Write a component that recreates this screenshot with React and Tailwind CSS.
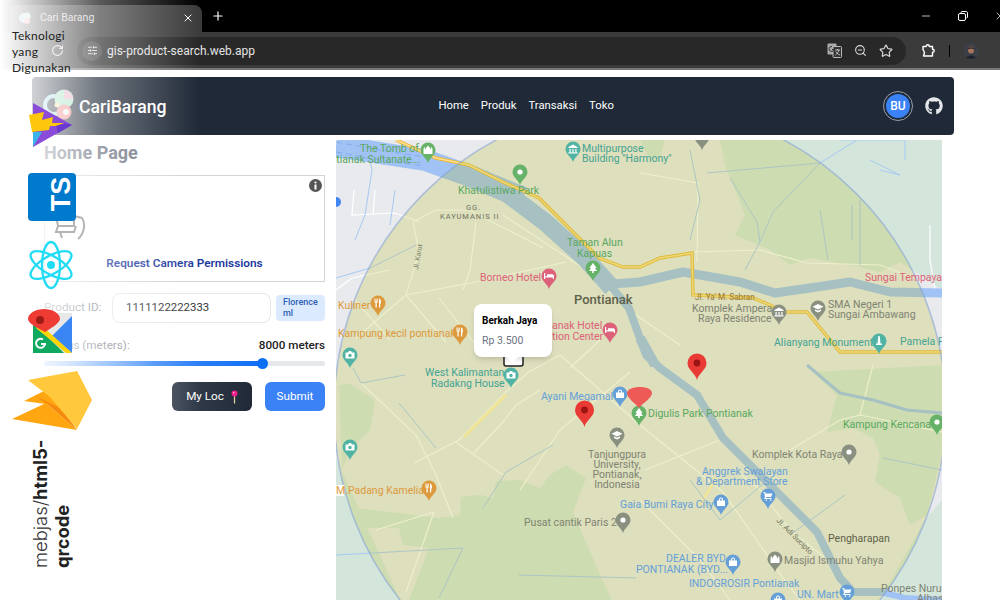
import { FaGithub } from "react-icons/fa";
import { RotateCw, X, Plus, Minus, ZoomOut, Star, SlidersHorizontal } from "lucide-react";

const GREEN = "#5aa85f";
const TEAL = "#45a392";
const ORANGE = "#dd9a3c";
const PINK = "#dd6178";
const BLUE = "#659fd8";
const GREY = "#7f8372";
const GREY_PIN = "#8a9080";
const GREEN_PIN = "#66b268";
const TEAL_PIN = "#50b3a3";

const greens = [
  "M720 140L942 140L942 290L900 262L880 272L850 265L810 258L790 265L770 250L735 235L745 215L735 190L725 165Z",
  "M336 458L336 600L400 600Z",
  "M339 385L350 384L375 400L370 430L350 450L342 470Z",
  "M439 518L460 515L461 497L480 495L494 498L496 481L519 480L540 488L550 475L566 465L586 478L573 512L600 575L612 600L409 600L429 548L403 545L399 528L356 528L356 508L439 518Z",
  "M813 372L837 395L827 432L853 428L873 438L880 455L875 482L900 498L910 525L927 515L942 452L942 365Z",
  "M830 600L880 600L925 520L942 500L942 600Z",
  "M640 140L665 140L660 158L650 160Z",
];

const water = [
  { d: "M336 150L380 160L425 166L470 181L523 204L570 244L603 277L629 308L646 355L660 368L697 395L723 438L780 495L817 532L840 578L853 592L890 592", w: 8 },
  { d: "M336 146L380 153L425 160L470 176L523 198", w: 22 },
  { d: "M505 192L545 222L585 258L612 288", w: 18 },
  { d: "M612 284L640 282L683 272L740 282L775 293L810 288L850 282L890 292L942 293", w: 9 },
  { d: "M640 338L655 365", w: 10 },
  { d: "M807 365L840 393L873 400L907 410L942 413", w: 3 },
  { d: "M880 592L905 598L942 600", w: 6 },
];

const yellowRoad = "M396 140L436 158L469 165L503 182L539 198L569 228L599 258L623 267L640 267L660 258L692 253L693 295L753 298L770 305L783 312L807 312L840 352L943 352";

const roads = [
  "M413 222L436 210L469 210L543 248",
  "M503 215L583 268L636 315L680 345",
  "M406 295L476 282L566 262",
  "M413 222L419 252L406 295L446 342",
  "M356 338L406 295",
  "M439 298L486 358",
  "M476 222L470 270L463 290",
  "M414 463L459 440L506 392L529 372L560 355",
  "M361 383L416 435L436 475L453 518",
  "M456 442L503 475",
  "M474 453L503 422L516 405L540 390",
  "M434 512L406 592",
  "M376 530L434 512",
  "M640 425L723 492L783 578L800 600",
  "M777 458L840 420L860 415L873 365",
  "M860 415L942 432",
  "M640 173L698 183L697 262",
  "M692 252L760 250L807 263L880 265L923 282",
  "M735 470L760 490L790 530L840 570",
  "M560 355L640 425",
  "M600 340L570 368",
  "M630 372L560 430L520 490",
  "M336 290L352 278L390 270",
  "M354 190L352 215L395 213L420 222",
  "M375 190L373 215",
  "M640 500L700 560L730 600",
  "M645 470L720 440",
  "M355 300L390 340",
  "M930 225L930 260L935 290",
];

const streams = [
  "M336 278L370 268L416 245",
  "M730 178L757 222L760 242L745 270",
  "M707 173L820 163L857 140",
  "M820 163L773 212L760 242",
  "M399 403L436 448",
  "M353 368L361 383L405 375",
  "M483 508L506 472L553 445",
  "M336 555L463 548L439 598",
  "M519 575L636 578",
  "M780 470L720 520L690 480",
  "M883 458L942 470",
  "M845 495L790 535",
  "M840 140L905 140L905 160",
  "M870 160L900 175L880 170",
  "M852 205L852 240",
  "M365 140L372 170L365 215L355 240",
  "M395 190L390 225",
  "M690 150L700 200L690 240",
  "M820 210L828 260",
  "M860 200L860 265",
];

// x, y are the head centre of the place pin; the tip is 13px below
function Pin({ x, y, color, glyph = "dot" }) {
  return (
    <g transform={`translate(${x} ${y})`}>
      <path d="M0 13C-1.5 8 -7.5 5 -7.5 0A7.5 7.5 0 1 1 7.5 0C7.5 5 1.5 8 0 13Z" fill={color} />
      {glyph === "dot" && <circle r="2.6" fill="#fff" />}
      {glyph === "tree" && <path d="M0 -5L3.6 0H2L4 3H-4L-2 0H-3.6ZM-.8 3H.8V5H-.8Z" fill="#fff" />}
      {glyph === "camera" && <path d="M-4.5 -2.5H-2L-1 -4H1L2 -2.5H4.5V3.5H-4.5ZM0 -1.2A1.7 1.7 0 1 0 0 2.2A1.7 1.7 0 1 0 0 -1.2Z" fill="#fff" fillRule="evenodd" />}
      {glyph === "fork" && <path d="M-3.5 -4.5V-.5H-2.5V4.5H-1.3V-.5H-.3V-4.5H-1V-1.5H-1.5V-4.5H-2.3V-1.5H-2.8V-4.5ZM1 -4.5C3 -4.5 3 -1 3 .5H2.2V4.5H1Z" fill="#fff" />}
      {glyph === "bed" && <path d="M-5 -3H-3.8V.2H-2V-1.8H3C4.2 -1.8 5 -1 5 0V3H3.8V1.5H-3.8V3H-5Z" fill="#fff" />}
      {glyph === "bag" && <path d="M-4 -1.5H4V4H-4ZM-2 -1.5V-2.5A2 2 0 0 1 2 -2.5V-1.5H1V-2.5A1 1 0 0 0 -1 -2.5V-1.5Z" fill="#fff" />}
      {glyph === "cart" && <path d="M-4.5 -4H-3L-2.3 -2.6H4.5L3 1H-1.7L-2.3 2H3.5V3H-4L-3 1L-3.8 -3H-4.5ZM-2.3 3.4H-1V4.7H-2.3ZM2 3.4H3.3V4.7H2Z" fill="#fff" />}
      {glyph === "cap" && <path d="M0 -4L5.5 -1.2L0 1.6L-5.5 -1.2ZM-3 1.2L0 2.8L3 1.2V3L0 4.6L-3 3Z" fill="#fff" />}
      {glyph === "monument" && <path d="M-.7 -5H.7L1.5 2.5H3V4H-3V2.5H-1.5Z" fill="#fff" />}
      {glyph === "school" && <path d="M0 -4.5L4.5 -2V-1H-4.5V-2ZM-3.5 0H-2.3V3H-3.5ZM-.6 0H.6V3H-.6ZM2.3 0H3.5V3H2.3ZM-4.5 3.2H4.5V4.4H-4.5Z" fill="#fff" />}
      {glyph === "mosque" && <path d="M-4.5 4V-1L-3.7 -3.5L-3 -1V0C-2.5 -2 -1 -3 0 -4.5C1 -3 2.5 -2 3 0V-1L3.7 -3.5L4.5 -1V4Z" fill="#fff" />}
    </g>
  );
}

function RedMarker({ x, y }) {
  return (
    <g transform={`translate(${x} ${y})`}>
      <path d="M0 17C-1.5 10 -9.5 7 -9.5 0A9.5 9.5 0 1 1 9.5 0C9.5 7 1.5 10 0 17Z" fill="#ea3a35" />
      <circle r="3.4" fill="#9c1414" />
    </g>
  );
}

function Label({ x, y, color, size = 10.5, anchor = "start", weight = 400, children }) {
  return (
    <text x={x} y={y} fill={color} fontSize={size} fontWeight={weight} textAnchor={anchor}>
      {children}
    </text>
  );
}

function MapView() {
  return (
    <svg viewBox="336 140 606 460" className="block w-full h-full" style={{ fontFamily: "Roboto, sans-serif" }}>
      <rect x="336" y="140" width="606" height="460" fill="#e8eaed" />
      {greens.map((d) => <path key={d} d={d} fill="#d4e6dc" />)}
      {roads.map((d) => <path key={d} d={d} fill="none" stroke="#fff" strokeWidth="1.2" />)}
      <path d="M464 437L506 395" stroke="#fff0c0" strokeWidth="3.5" />
      <path d="M700 505L716 478" stroke="#fff0c0" strokeWidth="3" />
      {streams.map((d) => <path key={d} d={d} fill="none" stroke="#a8c8f5" strokeWidth="1" />)}
      {water.map((p) => <path key={p.d} d={p.d} fill="none" stroke="#a0c2f4" strokeWidth={p.w} strokeLinejoin="round" />)}
      <path d="M336 142L380 150L425 157M336 152L380 160L425 166" fill="none" stroke="#7da6e8" strokeWidth="0.8" strokeDasharray="6 4" />
      <path d={yellowRoad} fill="none" stroke="#eeb73c" strokeWidth="3.4" />
      <path d={yellowRoad} fill="none" stroke="#fde293" strokeWidth="1.4" />
      <circle cx="336" cy="202" r="5" fill="#4285f4" />
      <circle cx="640" cy="410" r="306" fill="#bcbe30" fillOpacity="0.25" stroke="#7f9fd8" strokeOpacity="0.55" strokeWidth="1.5" />

      <Label x={419} y={152} color={GREEN} anchor="end">The Tomb of</Label>
      <Label x={420} y={163} color={GREEN} anchor="end">ontianak Sultanate...</Label>
      <Pin x={428} y={150} color={GREEN_PIN} glyph="mosque" />
      <Label x={582} y={152} color={TEAL}>Multipurpose</Label>
      <Label x={582} y={162} color={TEAL}>Building "Harmony"</Label>
      <Pin x={573} y={149} color={TEAL_PIN} glyph="school" />
      <Pin x={702} y={137} color={GREY_PIN} />
      <Pin x={520} y={172} color={GREEN_PIN} />
      <Label x={458} y={194} color={GREEN}>Khatulistiwa Park</Label>
      <text x={466} y={210} fill="#6f7260" fontSize="7.5" letterSpacing="1">GG.</text>
      <text x={440} y={219} fill="#6f7260" fontSize="7.5" letterSpacing="1">KAYUMANIS II</text>
      <text x={0} y={0} fill="#7b7d66" fontSize="7" transform="translate(418 270) rotate(-80)">Jl. Karot</text>
      <Label x={567} y={246} color={GREEN}>Taman Alun</Label>
      <Label x={577} y={257} color={GREEN}>Kapuas</Label>
      <Pin x={593} y={268} color={GREEN_PIN} glyph="tree" />
      <Label x={480} y={281} color={PINK}>Borneo Hotel</Label>
      <Pin x={549} y={276} color={PINK} glyph="bed" />
      <Label x={574} y={304} color="#5f6148" size={13} weight={500}>Pontianak</Label>
      <Label x={338} y={309} color={ORANGE}>Kuliner</Label>
      <Pin x={378} y={303} color={ORANGE} glyph="fork" />
      <Label x={338} y={337} color={ORANGE}>Kampung kecil pontianak</Label>
      <Pin x={460} y={332} color={ORANGE} glyph="fork" />
      <Label x={552} y={329} color={PINK}>anak Hotel</Label>
      <Label x={552} y={340} color={PINK}>tion Center</Label>
      <Pin x={610} y={330} color={PINK} glyph="bed" />
      <Pin x={350} y={355} color={TEAL_PIN} glyph="camera" />
      <Label x={425} y={376} color={TEAL}>West Kalimantan</Label>
      <Label x={431} y={387} color={TEAL}>Radakng House</Label>
      <Pin x={511} y={375} color={TEAL_PIN} glyph="camera" />
      <Label x={541} y={400} color={BLUE}>Ayani Megamal</Label>
      <Pin x={620} y={394} color={BLUE} glyph="bag" />
      <Pin x={639} y={413} color={GREEN_PIN} glyph="tree" />
      <Label x={648} y={417} color={GREEN}>Digulis Park Pontianak</Label>
      <Pin x={617} y={435} color={GREY_PIN} glyph="cap" />
      <Label x={617} y={458} color={GREY} anchor="middle">Tanjungpura</Label>
      <Label x={617} y={468} color={GREY} anchor="middle">University,</Label>
      <Label x={617} y={478} color={GREY} anchor="middle">Pontianak,</Label>
      <Label x={617} y={488} color={GREY} anchor="middle">Indonesia</Label>
      <Label x={620} y={508} color={BLUE}>Gaia Bumi Raya City</Label>
      <Pin x={721} y={502} color={BLUE} glyph="bag" />
      <Label x={524} y={526} color={GREY}>Pusat cantik Paris 2</Label>
      <Pin x={623} y={520} color={GREY_PIN} />
      <rect x="336" y="485" width="8" height="11" fill="#fff" />
      <Label x={336} y={494} color={ORANGE}>M.Padang Kamelia</Label>
      <Pin x={429} y={488} color={ORANGE} glyph="fork" />
      <Pin x={350} y={447} color={TEAL_PIN} glyph="camera" />
      <Label x={843} y={428} color={GREEN}>Kampung Kencana</Label>
      <Pin x={937} y={422} color={GREEN_PIN} />
      <Label x={752} y={458} color={GREY}>Komplek Kota Raya</Label>
      <Pin x={849} y={452} color={GREY_PIN} />
      <Label x={702} y={475} color={BLUE}>Anggrek Swalayan</Label>
      <Label x={696} y={485} color={BLUE}>& Department Store</Label>
      <Pin x={768} y={496} color={BLUE} glyph="cart" />
      <text x={0} y={0} fill="#70725c" fontSize="7.5" transform="translate(776 521) rotate(45)">Jl. Adi Sucipto</text>
      <Label x={828} y={542} color="#5f6148">Pengharapan</Label>
      <Label x={666} y={562} color={BLUE}>DEALER BYD</Label>
      <Label x={636} y={573} color={BLUE}>PONTIANAK (BYD...</Label>
      <Pin x={733} y={562} color={BLUE} glyph="bag" />
      <Label x={784} y={564} color={GREY}>Masjid Ismuhu Yahya</Label>
      <Pin x={775} y={559} color={GREY_PIN} glyph="mosque" />
      <Label x={689} y={587} color={BLUE}>INDOGROSIR Pontianak</Label>
      <Pin x={778} y={600} color={BLUE} glyph="bag" />
      <Label x={797} y={598} color={BLUE}>UN. Mart</Label>
      <Pin x={847} y={592} color={BLUE} glyph="cart" />
      <Label x={881} y={592} color={GREY}>Ponpes Nurus</Label>
      <Label x={917} y={602} color={GREY}>Alhas</Label>
      <Label x={692} y={312} color={GREY}>Komplek Ampera</Label>
      <Label x={698} y={322} color={GREY}>Raya Residence</Label>
      <Pin x={779} y={312} color={GREY_PIN} glyph="school" />
      <text x={695} y={300} fill="#9a7a3a" fontSize="8.2">Jl. Ya' M. Sabran</text>
      <Label x={828} y={308} color={GREY}>SMA Negeri 1</Label>
      <Label x={828} y={318} color={GREY}>Sungai Ambawang</Label>
      <Pin x={818} y={308} color={GREY_PIN} glyph="cap" />
      <Label x={865} y={281} color={PINK}>Sungai Tempayan</Label>
      <Label x={774} y={346} color={TEAL}>Alianyang Monument</Label>
      <Pin x={879} y={341} color={TEAL_PIN} glyph="monument" />
      <Label x={900} y={345} color={TEAL}>Pamela F</Label>

      <RedMarker x={584.5} y={410} />
      <RedMarker x={697} y={363} />
      <path d="M639 408C634 402 627 398 627 393C627 389 634 387 640 387C646 387 652 389 652 393C652 398 644 402 639 408Z" fill="#ee5a55" />

      <rect x="504" y="352" width="19" height="14" rx="2" fill="#fff" stroke="#222" strokeWidth="1.5" />
    </svg>
  );
}

function Popup() {
  return (
    <div className="absolute left-[138px] top-[164px] w-[78px] h-[53px] bg-white rounded-lg shadow-md px-2 pt-[10px] font-['Roboto',sans-serif]">
      <p className="text-[10px] leading-[14px] font-bold text-black">Berkah Jaya</p>
      <p className="text-[10.5px] leading-[14px] mt-[6px] text-gray-500">Rp 3.500</p>
      <div className="absolute left-[34px] bottom-[-4px] w-[9px] h-[9px] bg-white rotate-45" />
    </div>
  );
}

function BrowserChrome() {
  return (
    <div className="h-[70px] bg-black font-['Roboto',sans-serif]">
      <div className="h-[32px] flex items-end relative">
        <div className="ml-[10px] w-[192px] h-[27px] pb-[2px] bg-[#3b3b3b] rounded-t-lg flex items-center px-[8px] text-[#d8d8d8]">
          <svg width="14" height="14" viewBox="0 0 14 14">
            <circle cx="6" cy="7" r="5" fill="#a8d8e8" />
            <circle cx="9" cy="5" r="3.5" fill="#bde0c0" />
            <circle cx="9" cy="10" r="3" fill="#e8a0a0" />
          </svg>
          <span className="ml-[8px] text-[10.5px]">Cari Barang</span>
          <X size={12} className="ml-auto text-white" />
        </div>
        <Plus size={14} className="ml-[9px] mb-[9px] text-white" />
        <div className="ml-auto flex items-center gap-[25px] pb-[10px] text-white translate-x-[6px]">
          <Minus size={12} strokeWidth={1.5} />
          <svg width="12" height="12" viewBox="0 0 12 12" fill="none" stroke="#fff" strokeWidth="1">
            <rect x="1.5" y="3.5" width="7" height="7" rx="1.5" />
            <path d="M4 3V2.5C4 1.9 4.5 1.5 5 1.5H9C10 1.5 10.5 2 10.5 3V7C10.5 7.6 10 8 9.5 8" />
          </svg>
          <X size={12} strokeWidth={1.5} />
        </div>
      </div>
      <div className="h-[38px] pt-[1px] bg-[#3b3b3b] flex items-center border-b-2 border-[#777]">
        <RotateCw size={13} className="ml-[51px] text-[#e0e0e0]" />
        <div className="ml-[13px] w-[829px] h-[28px] rounded-full bg-[#282828] flex items-center pl-[5px] pr-[13px]">
          <span className="w-[20px] h-[20px] rounded-full bg-[#3f3f3f] flex items-center justify-center">
            <SlidersHorizontal size={11} className="text-[#e0e0e0]" />
          </span>
          <span className="ml-[5px] text-[12px] text-[#e3e3e3]">gis-product-search.web.app</span>
          <div className="ml-auto flex items-center gap-[12px] text-[#dcdcdc]">
            <svg width="15" height="15" viewBox="0 0 15 15">
              <rect x="0.5" y="0.5" width="9" height="11" rx="1" fill="#aaa" />
              <rect x="6" y="3.5" width="8.5" height="11" rx="1" fill="#333" stroke="#bbb" />
              <path d="M8 7H13M10.5 6V7M12 7C11.5 9 10 11 8.5 12M9 8.5C10 10 11 11.5 13 12" stroke="#ddd" strokeWidth="0.8" fill="none" />
              <path d="M5 3.5A2.5 2.5 0 1 0 7 6.5H5" stroke="#333" strokeWidth="1" fill="none" />
            </svg>
            <ZoomOut size={13} />
            <Star size={14} />
          </div>
        </div>
        <svg width="15" height="15" viewBox="0 0 15 15" fill="none" stroke="#fff" strokeWidth="1.4" strokeLinejoin="round" className="ml-[15px]">
          <path d="M2 3.5H5.2C5.2 1.2 8.3 1.2 8.3 3.5H11.5V6.2C13.8 6.2 13.8 9.3 11.5 9.3V13H2.5L3.5 9.5L2 6.5Z" />
        </svg>
        <div className="ml-[13px] w-[1px] h-[12px] bg-black" />
        <svg width="16" height="16" viewBox="0 0 16 16" className="ml-[13px]">
          <circle cx="8" cy="8" r="8" fill="#3c3f48" />
          <ellipse cx="8" cy="7" rx="3" ry="3.6" fill="#a5765e" />
          <path d="M4.7 6.5C4.5 3.5 11.5 3.5 11.3 6.5C9.5 5 6.5 5 4.7 6.5Z" fill="#1b1b1f" />
          <path d="M3 15C4 11.5 12 11.5 13 15L8 16Z" fill="#20242e" />
        </svg>
      </div>
    </div>
  );
}

function Navbar() {
  return (
    <nav className="ml-[32px] mt-[7px] w-[922px] h-[58px] bg-[#1f2937] rounded flex items-center pl-[11px] pr-[10px] text-white font-['Roboto',sans-serif]">
      <svg width="33" height="33" viewBox="0 0 33 33" className="mt-[-4px]">
        <circle cx="11" cy="17" r="9" fill="none" stroke="#a5dbe8" strokeWidth="4" />
        <circle cx="21" cy="11" r="9.5" fill="#a9e4c6" />
        <path d="M21 2A9.5 9.5 0 0 1 30 11H21Z" fill="#e9b1c3" />
        <circle cx="21" cy="24" r="7.5" fill="#ee8a8a" />
        <circle cx="23" cy="24" r="3" fill="#f5f5f5" />
        <circle cx="14" cy="17" r="2.5" fill="#f8e2a0" />
      </svg>
      <span className="ml-[3px] mt-[3px] text-[17.6px] font-medium">CariBarang</span>
      <div className="ml-[272px] mt-[1px] flex items-center gap-[12px] text-[11.3px]">
        <span>Home</span>
        <span>Produk</span>
        <span>Transaksi</span>
        <span>Toko</span>
      </div>
      <div className="ml-auto w-[30px] h-[30px] rounded-full border border-gray-400 flex items-center justify-center">
        <span className="w-[24px] h-[24px] rounded-full bg-[#3b82f6] flex items-center justify-center text-[12px] font-medium">BU</span>
      </div>
      <FaGithub size={18} className="ml-[12px] mr-[1px] text-[#e5e7eb]" />
    </nav>
  );
}

function ScanCard() {
  return (
    <div className="relative mt-[9px] h-[107px] border border-[#d4d4d8] flex flex-col items-center justify-end pb-[8px]">
      <svg width="13" height="13" viewBox="0 0 13 13" className="absolute top-[3px] right-[2px]">
        <circle cx="6.5" cy="6.5" r="6.5" fill="#555" />
        <circle cx="6.5" cy="3.5" r="1.1" fill="#fff" />
        <rect x="5.5" y="5.5" width="2" height="5" fill="#fff" />
      </svg>
      <span className="text-[11.8px] font-semibold text-[#1e3a9e]">Request Camera Permissions</span>
    </div>
  );
}

function SearchForm() {
  return (
    <aside className="w-[281px] font-['Roboto',sans-serif]">
      <h1 className="text-[18px] leading-[26px] font-bold text-[#6b7280]">Home Page</h1>
      <ScanCard />
      <div className="mt-[11px] flex items-center">
        <label className="w-[68px] text-[11.7px] text-[#8b8f96]">Product ID:</label>
        <div className="w-[159px] h-[30px] rounded-lg border border-[#e5e7eb] flex items-center pl-[13px] text-[11.4px] text-[#333]">1111122222333</div>
        <div className="ml-[5px] w-[49px] h-[26px] rounded bg-[#dbeafe] px-[7px] py-[2px] text-[9px] leading-[11px] font-medium text-[#2f5fb8]">Florence ml</div>
      </div>
      <div className="mt-[13px] flex justify-between items-center text-[11.7px] leading-[18px]">
        <span className="text-[#8b8f96]">Radius (meters):</span>
        <span className="font-medium text-[#222]">8000 meters</span>
      </div>
      <div className="relative mt-[7px] h-[5px] rounded-full bg-[#e5e7eb]">
        <div className="h-full w-[218px] rounded-full bg-linear-to-r from-[#bfdbfe] via-[#3b8af6] to-[#0b6ef5]" />
        <div className="absolute left-[213px] top-[-3px] w-[11px] h-[11px] rounded-full bg-[#0b6ef5]" />
      </div>
      <div className="mt-[16px] flex justify-end gap-[13px] text-[11.7px]">
        <button className="w-[80px] h-[29px] rounded-md bg-linear-to-r from-[#374151] to-[#1f2937] text-white flex items-center justify-center gap-[7px]">
          My Loc
          <svg width="7" height="14" viewBox="0 0 7 14">
            <path d="M3.5 6V13.5" stroke="#e8d8a8" strokeWidth="1.2" />
            <circle cx="3.5" cy="3.5" r="3" fill="#ec1c8c" />
            <circle cx="2.8" cy="2.8" r="0.8" fill="#ffc0e0" />
          </svg>
        </button>
        <button className="w-[60px] h-[29px] rounded-md bg-[#3b82f6] text-white">Submit</button>
      </div>
    </aside>
  );
}

function HandIcon() {
  return (
    <svg width="36" height="50" viewBox="0 0 36 50" className="absolute left-[50px] top-[192px]" fill="none" stroke="#b4b4b4" strokeWidth="2">
      <path d="M24 2V24L32 26C36 32 34 42 28 47" />
      <path d="M6 24H24V34H8ZM8 34L6 40H24L26 34M10 40L12 46" />
    </svg>
  );
}

// tech stack column that lies over the page
function TechOverlay() {
  return (
    <>
      <p className="absolute left-[12px] top-[28px] w-[62px] text-[12px] leading-[16px] text-[#222] font-['Lato',sans-serif] tracking-[0.3px]">Teknologi yang Digunakan</p>

      <svg width="46" height="46" viewBox="0 0 46 46" className="absolute left-[28px] top-[102px]">
        <path d="M5 1L44 23L5 45Z" fill="#8a4bd8" />
        <path d="M5 45L5 30L14 30Z" fill="#3bb5e8" />
        <path d="M1 13L16 10L14 18L25 15L24 21L37 21L28 24L22 24L21 28L4 30Z" fill="#fdc80c" />
        <path d="M37 21L44 23L30 31L28 24Z" fill="#6a3ad0" />
      </svg>

      <HandIcon />

      <div className="absolute left-[28px] top-[173px] w-[48px] h-[48px] rounded bg-[#007acc] flex items-center justify-end">
        <span className="-rotate-90 mr-[-3px] mt-[-6px] text-[27px] leading-[30px] font-bold text-white font-['Liberation_Sans',sans-serif]">TS</span>
      </div>

      <svg width="50" height="54" viewBox="-25 -27 50 54" className="absolute left-[26px] top-[238px]" fill="none" stroke="#22dcf5" strokeWidth="2.3">
        <ellipse rx="23" ry="9" transform="rotate(30)" />
        <ellipse rx="23" ry="9" transform="rotate(90)" />
        <ellipse rx="23" ry="9" transform="rotate(150)" />
        <circle r="4" fill="#22dcf5" stroke="none" />
      </svg>

      <svg width="46" height="48" viewBox="0 0 46 48" className="absolute left-[28px] top-[308px]">
        <path d="M5 5H44V45H5Z" fill="#e8e8e8" />
        <path d="M44 8L24 28L44 45Z" fill="#3a86f4" />
        <path d="M5 16V45H36L15 24Z" fill="#0fa960" />
        <path d="M12 16L44 45H38L8 20Z" fill="#fbd40c" />
        <path d="M32 11C32 15 22 21 17 24C12 21 0 16 0 11C0 5 8 1 16 1C24 1 32 5 32 11Z" fill="#ee3c35" />
        <circle cx="12" cy="12" r="4" fill="#9c1c18" />
        <path d="M17 36A4.5 4.5 0 1 1 15 31.5M13 36H18" stroke="#fff" strokeWidth="2" fill="none" />
      </svg>

      <svg width="82" height="60" viewBox="0 0 82 60" className="absolute left-[12px] top-[371px]">
        <path d="M12 30L32 20L60 45L40 34Z" fill="#ffa611" />
        <path d="M0 48L34 32L65 59Z" fill="#ffa611" />
        <path d="M22 24L50 38L65 59L34 32Z" fill="#f58a0c" />
        <path d="M16 9L65 0L80 29L65 58L38 26Z" fill="#ffc83d" />
      </svg>

      <p className="absolute left-[29px] top-[436px] h-[132px] [writing-mode:vertical-rl] rotate-180 text-[18.4px] leading-[22px] font-light text-[#333] font-['Inter',sans-serif]">
        mebjas/<b className="font-bold text-[#222]">html5-qrcode</b>
      </p>
    </>
  );
}

export default function App() {
  return (
    <div className="relative w-[1000px] h-[600px] overflow-hidden bg-white">
      <BrowserChrome />
      <Navbar />
      <main className="ml-[44px] mt-[5px] flex gap-[11px]">
        <SearchForm />
        <div className="relative w-[606px] h-[460px] overflow-hidden">
          <MapView />
          <Popup />
        </div>
      </main>
      <div className="absolute left-0 top-0 h-full w-[200px] bg-linear-to-r from-white via-white/35 to-transparent pointer-events-none" />
      <TechOverlay />
    </div>
  );
}
